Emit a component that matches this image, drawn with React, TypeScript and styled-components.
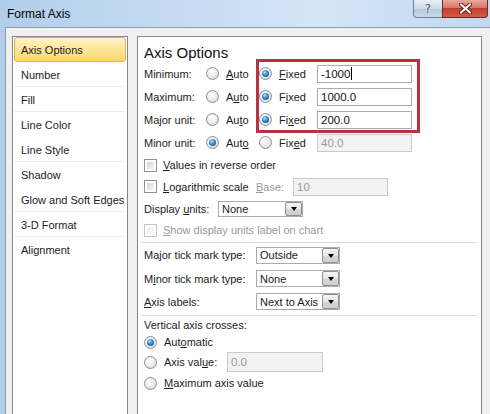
import React from 'react';
import styled, { createGlobalStyle } from 'styled-components';

const GlobalStyle = createGlobalStyle`
  html, body { margin: 0; padding: 0; }
  body {
    font-family: "Liberation Sans", Arial, sans-serif;
    font-size: 11px;
    color: #1c1c1c;
  }
  * { box-sizing: border-box; }
`;

const Window = styled.div`
  width: 490px;
  height: 414px;
  overflow: hidden;
  display: flex;
  flex-direction: column;
  background: linear-gradient(90deg, #b2cdea 0%, #c6dbf1 35%, #d4e5f6 65%, #c3d8ef 100%);
`;

const TitleBar = styled.div`
  height: 27px;
  flex: none;
  display: flex;
  align-items: flex-start;
`;

const Title = styled.div`
  padding: 6px 0 0 7px;
  font-size: 12px;
  line-height: 16px;
  color: #000;
`;

const CaptionButtons = styled.div`
  margin-left: auto;
  margin-right: 2px;
  display: flex;
`;

const HelpButton = styled.div`
  width: 29px;
  height: 18px;
  border: 1px solid #6f7f93;
  border-top: none;
  border-right: none;
  border-radius: 0 0 0 4px;
  background: linear-gradient(180deg, #e6eef6 0%, #cfdbe8 50%, #b6c7da 51%, #c9d8e8 100%);
  display: flex;
  align-items: center;
  justify-content: center;
  font-family: "DejaVu Sans", sans-serif;
  font-size: 12px;
  color: #4d5864;
  text-shadow: 0 0 2px #fff;
`;

const CloseButton = styled.div`
  width: 46px;
  height: 18px;
  border: 1px solid #6b2b28;
  border-top: none;
  border-radius: 0 0 4px 0;
  background: linear-gradient(180deg, #e8a99a 0%, #d8776a 45%, #c33d2e 50%, #d45a45 100%);
  display: flex;
  align-items: center;
  justify-content: center;
`;

const Body = styled.div`
  flex: 1;
  min-height: 0;
  margin-left: 5px;
  border-left: 1px solid #8a9cb2;
  border-top: 1px solid #8a9cb2;
  background: #f0f0f0;
  display: flex;
  align-items: stretch;
  gap: 9px;
  padding: 8px 0 0 6px;
`;

const NavList = styled.div`
  width: 116px;
  flex: none;
  background: #fff;
  border: 1px solid #85888d;
  border-bottom: none;
  padding: 0 1px;
`;

const NavItem = styled.div<{ $selected?: boolean; $sep?: boolean }>`
  height: 25px;
  display: flex;
  align-items: center;
  padding-left: 6px;
  white-space: nowrap;
  color: #1c1c1c;
  border: 1px solid transparent;
  border-bottom-color: ${(p) => (p.$sep ? '#ececec' : 'transparent')};
  ${(p) =>
    p.$selected &&
    `
    border-color: #e2b44c;
    border-radius: 3px;
    background: linear-gradient(180deg, #fff4c8 0%, #fde79c 45%, #fcd66c 100%);
  `}
`;

const Panel = styled.div`
  position: relative;
  width: 345px;
  flex: none;
  background: #fff;
  border: 1px solid #85888d;
  border-bottom: none;
  padding: 0 5px 0 6px;
`;

const Heading = styled.div`
  margin-top: 6px;
  height: 19px;
  font-size: 15px;
  line-height: 19px;
  color: #111;
`;

const AxisRow = styled.div`
  display: grid;
  grid-template-columns: 62px 53px 58px 95px;
  align-items: center;
  height: 23px;
`;

const Option = styled.div<{ $disabled?: boolean }>`
  display: flex;
  align-items: center;
  gap: 7px;
  color: ${(p) => (p.$disabled ? '#9a9a9a' : '#1c1c1c')};
  white-space: nowrap;
`;

const RadioDot = styled.span<{ $on?: boolean }>`
  position: relative;
  width: 13px;
  height: 13px;
  flex: none;
  border-radius: 50%;
  border: 1px solid #8c8e91;
  background: radial-gradient(circle at 40% 35%, #ffffff 0%, #eeeeee 45%, #cfd1d4 100%);
  &::after {
    content: '';
    display: ${(p) => (p.$on ? 'block' : 'none')};
    position: absolute;
    left: 2px;
    top: 2px;
    width: 7px;
    height: 7px;
    border-radius: 50%;
    background: radial-gradient(circle at 40% 35%, #b6e6ff 0%, #3b8fd0 40%, #0d3f70 100%);
  }
`;

const CheckBox = styled.span<{ $disabled?: boolean }>`
  width: 13px;
  height: 13px;
  flex: none;
  border: 1px solid ${(p) => (p.$disabled ? '#c4c4c4' : '#8e8f8f')};
  padding: 2px;
  background: #fff;
  &::before {
    content: '';
    display: block;
    width: 100%;
    height: 100%;
    background: ${(p) =>
      p.$disabled
        ? 'linear-gradient(135deg, #ececec, #fbfbfb)'
        : 'linear-gradient(135deg, #cfd3d8, #f7f7f7)'};
  }
`;

const Field = styled.div<{ $w: number; $h?: number; $disabled?: boolean }>`
  width: ${(p) => p.$w}px;
  height: ${(p) => p.$h ?? 18}px;
  flex: none;
  border: 1px solid ${(p) => (p.$disabled ? '#c9c9c9' : '#a9abb0')};
  background: ${(p) => (p.$disabled ? '#f2f2f2' : '#fff')};
  color: ${(p) => (p.$disabled ? '#9a9a9a' : '#111')};
  display: flex;
  align-items: center;
  padding-left: 3px;
  font-size: 11.5px;
`;

const Caret = styled.span`
  width: 1px;
  height: 13px;
  background: #000;
  margin-left: 1px;
`;

const Row = styled.div<{ $h: number }>`
  display: flex;
  align-items: center;
  height: ${(p) => p.$h}px;
`;

const CheckOption = styled(Option)<{ $w?: number }>`
  gap: 6px;
  width: ${(p) => (p.$w ? `${p.$w}px` : 'auto')};
  flex: none;
`;

const Label = styled.div<{ $w: number; $disabled?: boolean }>`
  width: ${(p) => p.$w}px;
  flex: none;
  white-space: nowrap;
  color: ${(p) => (p.$disabled ? '#9a9a9a' : '#1c1c1c')};
`;

const Select = styled.div<{ $w: number; $h: number }>`
  width: ${(p) => p.$w}px;
  height: ${(p) => p.$h}px;
  flex: none;
  border: 1px solid #a9abb0;
  background: #fff;
  display: flex;
  align-items: stretch;
  font-size: 11px;
`;

const SelectValue = styled.div`
  flex: 1;
  min-width: 0;
  display: flex;
  align-items: center;
  padding-left: 3px;
  white-space: nowrap;
  overflow: hidden;
`;

const SelectButton = styled.div`
  width: 17px;
  flex: none;
  border: 1px solid #8f8f8f;
  border-radius: 2px;
  background: linear-gradient(180deg, #f4f4f4 0%, #e6e6e6 50%, #d6d6d6 51%, #cfcfcf 100%);
  display: flex;
  align-items: center;
  justify-content: center;
  &::after {
    content: '';
    border-left: 3.5px solid transparent;
    border-right: 3.5px solid transparent;
    border-top: 4px solid #000;
    margin-top: 1px;
  }
`;

const Separator = styled.div`
  height: 1px;
  background: #dadada;
  margin: 2px 0 0 -3px;
  width: 336px;
`;

const Highlight = styled.div`
  position: absolute;
  left: 118px;
  top: 22px;
  width: 164px;
  height: 74px;
  border: 3px solid #b8323f;
  pointer-events: none;
`;

const Radio: React.FC<{ on?: boolean; children: React.ReactNode; disabled?: boolean }> = ({
  on,
  children,
  disabled,
}) => (
  <Option $disabled={disabled}>
    <RadioDot $on={on} />
    <span>{children}</span>
  </Option>
);

const Check: React.FC<{ children: React.ReactNode; disabled?: boolean; w?: number }> = ({
  children,
  disabled,
  w,
}) => (
  <CheckOption $disabled={disabled} $w={w}>
    <CheckBox $disabled={disabled} />
    <span>{children}</span>
  </CheckOption>
);

const Dropdown: React.FC<{ w: number; h: number; value: string }> = ({ w, h, value }) => (
  <Select $w={w} $h={h}>
    <SelectValue>{value}</SelectValue>
    <SelectButton />
  </Select>
);

const navItems: { label: string; sep?: boolean; selected?: boolean }[] = [
  { label: 'Axis Options', selected: true },
  { label: 'Number', sep: true },
  { label: 'Fill', sep: true },
  { label: 'Line Color' },
  { label: 'Line Style', sep: true },
  { label: 'Shadow' },
  { label: 'Glow and Soft Edges', sep: true },
  { label: '3-D Format', sep: true },
  { label: 'Alignment' },
];

// underline the access-key letter at index i
const u = (s: string, i: number) => (
  <>
    {s.slice(0, i)}
    <u>{s[i]}</u>
    {s.slice(i + 1)}
  </>
);

export default function App() {
  return (
    <>
      <GlobalStyle />
      <Window>
        <TitleBar>
          <Title>Format Axis</Title>
          <CaptionButtons>
            <HelpButton>?</HelpButton>
            <CloseButton>
              <svg width="13" height="11" viewBox="0 0 13 11">
                <path d="M2 1.5 L11 9.5 M11 1.5 L2 9.5" stroke="#5a1d18" strokeWidth="4" strokeLinecap="round" />
                <path d="M2 1.5 L11 9.5 M11 1.5 L2 9.5" stroke="#fff" strokeWidth="2.2" strokeLinecap="round" />
              </svg>
            </CloseButton>
          </CaptionButtons>
        </TitleBar>
        <Body>
          <NavList>
            {navItems.map((n) => (
              <NavItem key={n.label} $selected={n.selected} $sep={n.sep}>
                {n.label}
              </NavItem>
            ))}
          </NavList>
          <Panel>
            <Heading>Axis Options</Heading>
            <AxisRow>
              <Label $w={62}>Minimum:</Label>
              <Radio>{u('Auto', 0)}</Radio>
              <Radio on>{u('Fixed', 0)}</Radio>
              <Field $w={95}>
                -1000
                <Caret />
              </Field>
            </AxisRow>
            <AxisRow>
              <Label $w={62}>Maximum:</Label>
              <Radio>{u('Auto', 1)}</Radio>
              <Radio on>{u('Fixed', 1)}</Radio>
              <Field $w={95}>1000.0</Field>
            </AxisRow>
            <AxisRow>
              <Label $w={62}>Major unit:</Label>
              <Radio>{u('Auto', 2)}</Radio>
              <Radio on>{u('Fixed', 2)}</Radio>
              <Field $w={95}>200.0</Field>
            </AxisRow>
            <AxisRow>
              <Label $w={62}>Minor unit:</Label>
              <Radio on>{u('Auto', 3)}</Radio>
              <Radio>{u('Fixed', 3)}</Radio>
              <Field $w={95} $disabled>
                40.0
              </Field>
            </AxisRow>

            <Row $h={22}>
              <Check>{u('Values in reverse order', 0)}</Check>
            </Row>
            <Row $h={21}>
              <Check w={112}>{u('Logarithmic scale', 0)}</Check>
              <Label $w={37} $disabled>
                {u('Base:', 0)}
              </Label>
              <Field $w={95} $disabled>
                10
              </Field>
            </Row>
            <Row $h={23}>
              <Label $w={74}>Display {u('units:', 0)}</Label>
              <Dropdown w={85} h={16} value="None" />
            </Row>
            <Row $h={20}>
              <Check disabled>{u('Show display units label on chart', 0)}</Check>
            </Row>
            <Separator />

            <Row $h={24}>
              <Label $w={112}>{u('Major tick mark type:', 2)}</Label>
              <Dropdown w={84} h={17} value="Outside" />
            </Row>
            <Row $h={23}>
              <Label $w={112}>{u('Minor tick mark type:', 1)}</Label>
              <Dropdown w={84} h={17} value="None" />
            </Row>
            <Row $h={23}>
              <Label $w={112}>{u('Axis labels:', 0)}</Label>
              <Dropdown w={84} h={17} value="Next to Axis" />
            </Row>
            <Separator />

            <Row $h={17}>
              <Label $w={200}>Vertical axis crosses:</Label>
            </Row>
            <Row $h={18}>
              <Radio on>{u('Automatic', 3)}</Radio>
            </Row>
            <Row $h={22}>
              <Option>
                <RadioDot />
                <Label $w={63}>{u('Axis value:', 8)}</Label>
              </Option>
              <Field $w={96} $h={20} $disabled>
                0.0
              </Field>
            </Row>
            <Row $h={20}>
              <Radio>{u('Maximum axis value', 0)}</Radio>
            </Row>

            <Highlight />
          </Panel>
        </Body>
      </Window>
    </>
  );
}
